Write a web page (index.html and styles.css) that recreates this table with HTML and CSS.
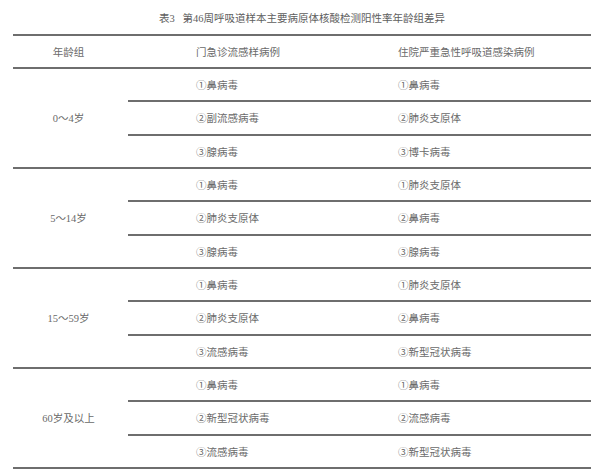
FILE: index.html
```html
<!DOCTYPE html>
<html lang="zh">
<head>
<meta charset="utf-8">
<link rel="stylesheet" href="styles.css">
</head>
<body>
<div class="page">
  <div class="title">表3&nbsp;&nbsp;&nbsp;第46周呼吸道样本主要病原体核酸检测阳性率年龄组差异</div>
  <table class="tbl">
    <colgroup>
      <col class="w1">
      <col class="w2">
      <col class="w3">
    </colgroup>
    <thead>
      <tr>
        <th class="c1">年龄组</th>
        <th class="c2">门急诊流感样病例</th>
        <th class="c3">住院严重急性呼吸道感染病例</th>
      </tr>
    </thead>
    <tbody>
      <tr class="first">
        <td class="c1" rowspan="3">0～4岁</td>
        <td class="c2">①鼻病毒</td>
        <td class="c3">①鼻病毒</td>
      </tr>
      <tr>
        <td class="c2">②副流感病毒</td>
        <td class="c3">②肺炎支原体</td>
      </tr>
      <tr class="last">
        <td class="c2">③腺病毒</td>
        <td class="c3">③博卡病毒</td>
      </tr>

      <tr class="first">
        <td class="c1" rowspan="3">5～14岁</td>
        <td class="c2">①鼻病毒</td>
        <td class="c3">①肺炎支原体</td>
      </tr>
      <tr>
        <td class="c2">②肺炎支原体</td>
        <td class="c3">②鼻病毒</td>
      </tr>
      <tr class="last">
        <td class="c2">③腺病毒</td>
        <td class="c3">③腺病毒</td>
      </tr>

      <tr class="first">
        <td class="c1" rowspan="3">15～59岁</td>
        <td class="c2">①鼻病毒</td>
        <td class="c3">①肺炎支原体</td>
      </tr>
      <tr>
        <td class="c2">②肺炎支原体</td>
        <td class="c3">②鼻病毒</td>
      </tr>
      <tr class="last">
        <td class="c2">③流感病毒</td>
        <td class="c3">③新型冠状病毒</td>
      </tr>

      <tr class="first">
        <td class="c1" rowspan="3">60岁及以上</td>
        <td class="c2">①鼻病毒</td>
        <td class="c3">①鼻病毒</td>
      </tr>
      <tr>
        <td class="c2">②新型冠状病毒</td>
        <td class="c3">②流感病毒</td>
      </tr>
      <tr class="last">
        <td class="c2">③流感病毒</td>
        <td class="c3">③新型冠状病毒</td>
      </tr>
    </tbody>
  </table>
</div>
</body>
</html>
```

FILE: styles.css
```css
html, body {
  margin: 0;
  padding: 0;
  background: #ffffff;
}

body {
  font-family: "Liberation Serif", "Noto Sans CJK SC", serif;
  color: #6a6a6a;
  font-size: 10.5px;
}

.page {
  width: 578px;
  margin-left: 13px;
  padding-top: 12px;
}

.title {
  text-align: center;
  height: 13px;
  line-height: 13px;
  margin-bottom: 9px;
  font-size: 10.5px;
  color: #5e5e5e;
}

.tbl {
  width: 578px;
  border-collapse: collapse;
  table-layout: fixed;
  border-top: 2px solid #6e6e6e;
}

.w1 { width: 115px; }
.w2 { width: 201px; }
.w3 { width: 262px; }

.tbl th,
.tbl td {
  box-sizing: border-box;
  padding: 0;
  height: 33.33px;
  font-weight: normal;
  vertical-align: middle;
  white-space: nowrap;
}

.tbl th {
  height: 33px;
  border-bottom: 2px solid #6e6e6e;
}

.tbl .c1 {
  text-align: center;
  padding-right: 4px;
}

.tbl .c2 {
  text-align: left;
  padding-left: 68px;
}

.tbl .c3 {
  text-align: left;
  padding-left: 69px;
}

.tbl tbody tr td.c2,
.tbl tbody tr td.c3 {
  border-bottom: 2px solid #6e6e6e;
}

.tbl tbody tr.last td,
.tbl tbody td.c1 {
  border-bottom: 2px solid #6e6e6e;
}
```
